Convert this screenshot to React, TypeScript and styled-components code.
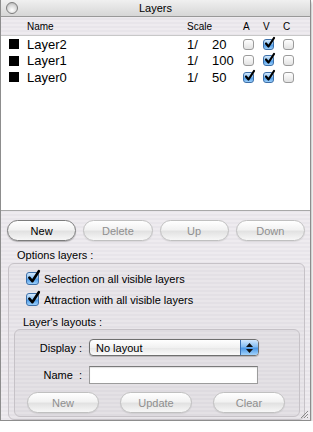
import styled, { createGlobalStyle } from 'styled-components'

const GlobalStyle = createGlobalStyle`
  html, body {
    margin: 0;
    padding: 0;
    background: #ffffff;
  }
  body {
    font-family: 'Liberation Sans', Arial, sans-serif;
    color: #000;
  }
`

const stripes = `repeating-linear-gradient(to bottom, #eeebef 0px, #eeebef 2px, #e8e5ea 2px, #e8e5ea 4px)`

const Window = styled.div`
  position: relative;
  width: 309px;
  height: 420px;
  border: 1px solid #8d8d8d;
  border-top: none;
  box-shadow: 0 2px 3px rgba(0, 0, 0, 0.45);
  background: ${stripes};
  display: flex;
  flex-direction: column;
  overflow: hidden;
`

const TitleBar = styled.div`
  height: 16px;
  flex: none;
  display: grid;
  grid-template-columns: 1fr auto 1fr;
  align-items: center;
  background: linear-gradient(to bottom, #f0f0f0, #d6d6d6);
  border-bottom: 1px solid #989898;
  font-size: 11px;
`

const CloseButton = styled.span`
  width: 10px;
  height: 10px;
  margin-left: 5px;
  border-radius: 50%;
  border: 1px solid #7d7d7d;
  background: radial-gradient(circle at 50% 70%, #ffffff 0%, #d9d9d9 55%, #a9a9a9 100%);
`

const TitleText = styled.span`
  line-height: 16px;
`

const Columns = `
  display: grid;
  grid-template-columns: 26px 160px 25px 30px 20px 20px 20px;
  align-items: center;
`

const HeaderRow = styled.div`
  ${Columns}
  height: 18px;
  flex: none;
  font-size: 10px;
  border-bottom: 1px solid #c8c8c8;
`

const HeaderCell = styled.span<{ $pad?: number }>`
  padding-left: ${(p) => p.$pad ?? 0}px;
`

const List = styled.div`
  height: 174px;
  flex: none;
  background: #ffffff;
  border-bottom: 1px solid #a8a8a8;
`

const Row = styled.div`
  ${Columns}
  height: 16.5px;
  font-size: 13px;
`

const Swatch = styled.span`
  width: 10px;
  height: 10px;
  margin-left: 8px;
  background: #000;
`

const SmallBox = styled.span<{ $checked?: boolean }>`
  position: relative;
  display: inline-block;
  box-sizing: border-box;
  width: 11px;
  height: 11px;
  margin-left: 1px;
  border-radius: 3px;
  border: 1px solid ${(p) => (p.$checked ? '#3d6fa8' : '#9b9b9b')};
  background: ${(p) =>
    p.$checked
      ? 'linear-gradient(to bottom, #d3e9fd 0%, #8cc2f3 45%, #4d9be8 55%, #9dd0fb 100%)'
      : 'linear-gradient(to bottom, #ffffff, #e2e2e2)'};
`

const BigBox = styled(SmallBox)`
  width: 13px;
  height: 13px;
  margin-left: 0;
`

const Tick = styled.svg`
  position: absolute;
  left: 0px;
  top: -3px;
  overflow: visible;
`

function Check({ checked, big }: { checked?: boolean; big?: boolean }) {
  const Box = big ? BigBox : SmallBox
  const s = big ? 13 : 11
  return (
    <Box $checked={checked}>
      {checked && (
        <Tick width={s} height={s} viewBox='0 0 11 11'>
          <path d='M2 6.5 L4.5 9.5 L10 1' fill='none' stroke='#000' strokeWidth='2.2' strokeLinecap='round' strokeLinejoin='round' />
        </Tick>
      )}
    </Box>
  )
}

const ButtonRow = styled.div<{ $gap: number; $indent?: number }>`
  display: flex;
  gap: ${(p) => p.$gap}px;
  padding-left: ${(p) => p.$indent ?? 0}px;
`

const AquaButton = styled.button<{ $width: number; $enabled?: boolean }>`
  box-sizing: border-box;
  width: ${(p) => p.$width}px;
  height: 21px;
  padding: 0;
  border-radius: 11px;
  border: 1px solid ${(p) => (p.$enabled ? '#7c7c7c' : '#c0c0c0')};
  background: linear-gradient(to bottom, #ffffff 0%, #f2f2f2 45%, #e2e2e2 55%, #f7f7f7 100%);
  box-shadow: ${(p) => (p.$enabled ? '0 1px 1px rgba(0,0,0,0.25)' : '0 1px 1px rgba(0,0,0,0.08)')};
  font-family: 'Liberation Sans', Arial, sans-serif;
  font-size: 11px;
  color: ${(p) => (p.$enabled ? '#000' : '#8f8f8f')};
`

const Body = styled.div`
  flex: 1;
  display: flex;
  flex-direction: column;
  padding: 9px 5px 0 6px;
`

const SectionLabel = styled.div<{ $indent: number; $top: number }>`
  font-size: 11px;
  line-height: 13px;
  padding-left: ${(p) => p.$indent}px;
  margin-top: ${(p) => p.$top}px;
`

const GroupBox = styled.div`
  border: 1px solid #c6c2c7;
  border-radius: 6px;
  background: rgba(0, 0, 0, 0.018);
  display: flex;
  flex-direction: column;
`

const OuterGroup = styled(GroupBox)`
  margin: 1px 0 0 1px;
  padding: 8px 4px 2px 5px;
  flex: 1;
`

const InnerGroup = styled(GroupBox)`
  padding: 9px 0 3px 0;
  flex: 1;
`

const OptionRow = styled.label`
  display: flex;
  align-items: center;
  gap: 5px;
  height: 13px;
  padding-left: 12px;
  margin-bottom: 8px;
  font-size: 11px;
`

const FieldRow = styled.div<{ $mb: number }>`
  display: grid;
  grid-template-columns: 67px 170px;
  column-gap: 7px;
  align-items: center;
  margin-bottom: ${(p) => p.$mb}px;
  font-size: 11px;
`

const FieldLabel = styled.span`
  text-align: right;
  white-space: pre;
`

const Select = styled.div`
  box-sizing: border-box;
  height: 17px;
  display: flex;
  align-items: center;
  border: 1px solid #6f6f6f;
  border-radius: 4px;
  background: linear-gradient(to bottom, #ffffff, #f1f1f1 50%, #e6e6e6 51%, #fbfbfb);
  box-shadow: 0 1px 1px rgba(0, 0, 0, 0.2);
  overflow: hidden;
`

const SelectText = styled.span`
  flex: 1;
  padding-left: 6px;
`

const Stepper = styled.span`
  width: 17px;
  height: 100%;
  display: flex;
  flex-direction: column;
  align-items: center;
  justify-content: center;
  gap: 2px;
  border-left: 1px solid #3b6fb0;
  background: linear-gradient(to bottom, #d2e8fd 0%, #85bdf2 45%, #4a97e6 55%, #a3d3fb 100%);
`

const TextInput = styled.div`
  box-sizing: border-box;
  width: 169px;
  height: 18px;
  background: #fff;
  border: 1px solid #9c9c9c;
  border-top-color: #7a7a7a;
  box-shadow: inset 0 1px 1px rgba(0, 0, 0, 0.12);
`

const Grip = styled.svg`
  position: absolute;
  right: 1px;
  bottom: 1px;
`

export default function App() {
  const layers = [
    { name: 'Layer2', scale: '20', a: false, v: true, c: false },
    { name: 'Layer1', scale: '100', a: false, v: true, c: false },
    { name: 'Layer0', scale: '50', a: true, v: true, c: false }
  ]

  return (
    <>
      <GlobalStyle />
      <Window>
        <TitleBar>
          <CloseButton />
          <TitleText>Layers</TitleText>
          <span />
        </TitleBar>
        <HeaderRow>
          <span />
          <HeaderCell>Name</HeaderCell>
          <HeaderCell>Scale</HeaderCell>
          <span />
          <HeaderCell $pad={1}>A</HeaderCell>
          <HeaderCell $pad={1}>V</HeaderCell>
          <HeaderCell $pad={1}>C</HeaderCell>
        </HeaderRow>
        <List>
          {layers.map((layer) => (
            <Row key={layer.name}>
              <Swatch />
              <span>{layer.name}</span>
              <span>1/</span>
              <span>{layer.scale}</span>
              <Check checked={layer.a} />
              <Check checked={layer.v} />
              <Check checked={layer.c} />
            </Row>
          ))}
        </List>
        <Body>
          <ButtonRow $gap={7}>
            <AquaButton $width={70} $enabled>New</AquaButton>
            <AquaButton $width={70}>Delete</AquaButton>
            <AquaButton $width={70}>Up</AquaButton>
            <AquaButton $width={70}>Down</AquaButton>
          </ButtonRow>
          <SectionLabel $indent={10} $top={8}>Options layers :</SectionLabel>
          <OuterGroup>
            <OptionRow>
              <Check big checked />
              Selection on all visible layers
            </OptionRow>
            <OptionRow>
              <Check big checked />
              Attraction with all visible layers
            </OptionRow>
            <SectionLabel $indent={9} $top={2}>Layer's layouts :</SectionLabel>
            <InnerGroup>
              <FieldRow $mb={10}>
                <FieldLabel>Display :</FieldLabel>
                <Select>
                  <SelectText>No layout</SelectText>
                  <Stepper>
                    <svg width='7' height='4' viewBox='0 0 7 4'>
                      <path d='M0 4 L3.5 0 L7 4 Z' fill='#111' />
                    </svg>
                    <svg width='7' height='4' viewBox='0 0 7 4'>
                      <path d='M0 0 L3.5 4 L7 0 Z' fill='#111' />
                    </svg>
                  </Stepper>
                </Select>
              </FieldRow>
              <FieldRow $mb={8}>
                <FieldLabel>{'Name  :'}</FieldLabel>
                <TextInput />
              </FieldRow>
              <ButtonRow $gap={21} $indent={12}>
                <AquaButton $width={72}>New</AquaButton>
                <AquaButton $width={72}>Update</AquaButton>
                <AquaButton $width={72}>Clear</AquaButton>
              </ButtonRow>
            </InnerGroup>
          </OuterGroup>
        </Body>
        <Grip width='10' height='10' viewBox='0 0 10 10'>
          <path d='M9 2 L2 9 M9 5 L5 9 M9 8 L8 9' stroke='#8a8a8a' strokeWidth='1' />
        </Grip>
      </Window>
    </>
  )
}
